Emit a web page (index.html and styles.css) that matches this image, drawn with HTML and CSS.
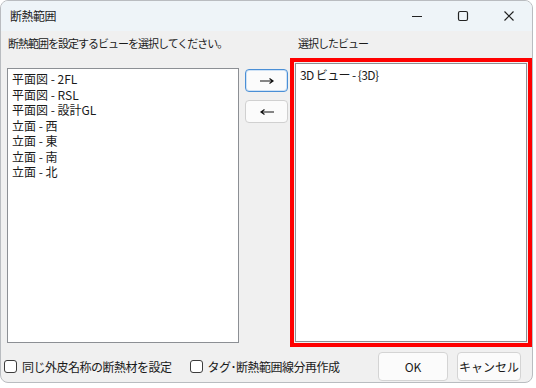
FILE: index.html
```html
<!DOCTYPE html>
<html lang="ja">
<head>
    <meta charset="UTF-8">
    <title>断熱範囲</title>
    <link rel="stylesheet" href="styles.css">
</head>
<body>
    <div class="window">
        <div class="titlebar">
            <div class="title">断熱範囲</div>
            <div class="controls">
                <span class="ctl">
                    <svg width="12" height="12" viewBox="0 0 12 12"><path d="M1 6.5h10" stroke="#222" stroke-width="1.2"/></svg>
                </span>
                <span class="ctl">
                    <svg width="12" height="12" viewBox="0 0 12 12"><rect x="1.5" y="1.5" width="9" height="9" rx="1.5" fill="none" stroke="#222" stroke-width="1.2"/></svg>
                </span>
                <span class="ctl">
                    <svg width="12" height="12" viewBox="0 0 12 12"><path d="M1.5 1.5l9 9M10.5 1.5l-9 9" stroke="#222" stroke-width="1.2"/></svg>
                </span>
            </div>
        </div>

        <div class="content">
            <div class="labels">
                <div class="label-left">断熱範囲を設定するビューを選択してください。</div>
                <div class="label-right">選択したビュー</div>
            </div>

            <div class="main">
                <div class="listbox source">
                    <div class="item">平面図 - 2FL</div>
                    <div class="item">平面図 - RSL</div>
                    <div class="item">平面図 - 設計GL</div>
                    <div class="item">立面 - 西</div>
                    <div class="item">立面 - 東</div>
                    <div class="item">立面 - 南</div>
                    <div class="item">立面 - 北</div>
                </div>

                <div class="move-buttons">
                    <button class="move-btn focused">
                        <svg width="16" height="8" viewBox="0 0 16 8"><path d="M1 4h13M10.5 1.5L14 4l-3.5 2.5" fill="none" stroke="#111" stroke-width="1.2"/></svg>
                    </button>
                    <button class="move-btn">
                        <svg width="16" height="8" viewBox="0 0 16 8"><path d="M15 4H2M5.5 1.5L2 4l3.5 2.5" fill="none" stroke="#111" stroke-width="1.2"/></svg>
                    </button>
                </div>

                <div class="highlight">
                    <div class="listbox target">
                        <div class="item">3D ビュー - {3D}</div>
                    </div>
                </div>
            </div>

            <div class="footer">
                <label class="check">
                    <span class="box"></span>
                    同じ外皮名称の断熱材を設定
                </label>
                <label class="check second">
                    <span class="box"></span>
                    タグ･断熱範囲線分再作成
                </label>
                <div class="actions">
                    <button class="btn">OK</button>
                    <button class="btn">キャンセル</button>
                </div>
            </div>
        </div>
    </div>
</body>
</html>
```

FILE: styles.css
```css
* {
    margin: 0;
    padding: 0;
    box-sizing: border-box;
}

body {
    font-family: "Noto Sans CJK JP", "Noto Sans", sans-serif;
    font-size: 12px;
    color: #1a1a1a;
    background: #ffffff;
    width: 536px;
    height: 388px;
    overflow: hidden;
}

.window {
    width: 533px;
    height: 383px;
    background: #f0f0f0;
    border: 1px solid #b9bcc0;
    border-radius: 8px;
    overflow: hidden;
    display: flex;
    flex-direction: column;
}

.titlebar {
    height: 30px;
    background: #eef4f8;
    display: flex;
    align-items: center;
    justify-content: space-between;
    flex-shrink: 0;
}

.title {
    padding-left: 9px;
    font-size: 12px;
    line-height: 14px;
    color: #222;
    letter-spacing: -0.5px;
}

.controls {
    display: flex;
    height: 100%;
}

.ctl {
    width: 46px;
    display: flex;
    align-items: center;
    justify-content: center;
}

.content {
    flex: 1;
    padding: 5px 0 0 6px;
    display: flex;
    flex-direction: column;
}

.labels {
    display: flex;
    height: 14px;
    line-height: 14px;
    font-size: 11px;
    letter-spacing: -1px;
}

.label-left {
    width: 291px;
    padding-left: 1px;
}

.main {
    display: flex;
    align-items: flex-start;
    margin-top: 8px;
}

.listbox {
    background: #ffffff;
    border: 1px solid #8c8f94;
    padding: 2px 4px;
}

.listbox .item {
    font-size: 12px;
    line-height: 15.5px;
    white-space: nowrap;
}

.source {
    width: 232px;
    height: 275px;
    margin-top: 10px;
}

.move-buttons {
    display: flex;
    flex-direction: column;
    gap: 8px;
    margin-top: 11px;
    margin-left: 6px;
}

.move-btn {
    width: 43px;
    height: 23px;
    background: #fbfbfb;
    border: 1px solid #d0d0d0;
    border-radius: 4px;
    display: flex;
    align-items: center;
    justify-content: center;
}

.move-btn.focused {
    border-color: #4a8fd6;
    box-shadow: inset 0 0 0 1px #cfe2f5;
}

.highlight {
    width: 242px;
    height: 289px;
    margin-left: 2px;
    border: 4px solid #ff0000;
    padding: 1px;
}

.target {
    width: 100%;
    height: 100%;
    padding-top: 3px;
}

.target .item {
    letter-spacing: -0.6px;
}

.footer {
    display: flex;
    align-items: center;
    margin-top: 5px;
    margin-left: -3px;
}

.check {
    display: flex;
    align-items: center;
    gap: 5px;
    font-size: 12px;
    line-height: 14px;
    color: #1a1a1a;
    letter-spacing: -0.5px;
}

.check.second {
    margin-left: 18px;
}

.box {
    width: 13px;
    height: 13px;
    border: 1px solid #3c3c3c;
    border-radius: 3px;
    background: #ffffff;
}

.actions {
    display: flex;
    gap: 9px;
    margin-left: auto;
    margin-right: 11px;
}

.btn {
    height: 29px;
    background: #fbfbfb;
    border: 1px solid #d4d4d4;
    border-radius: 4px;
    font-family: "Noto Sans CJK JP", "Noto Sans", sans-serif;
    font-size: 12px;
    color: #1a1a1a;
    width: 70px;
}

.btn + .btn {
    width: 64px;
}
```
